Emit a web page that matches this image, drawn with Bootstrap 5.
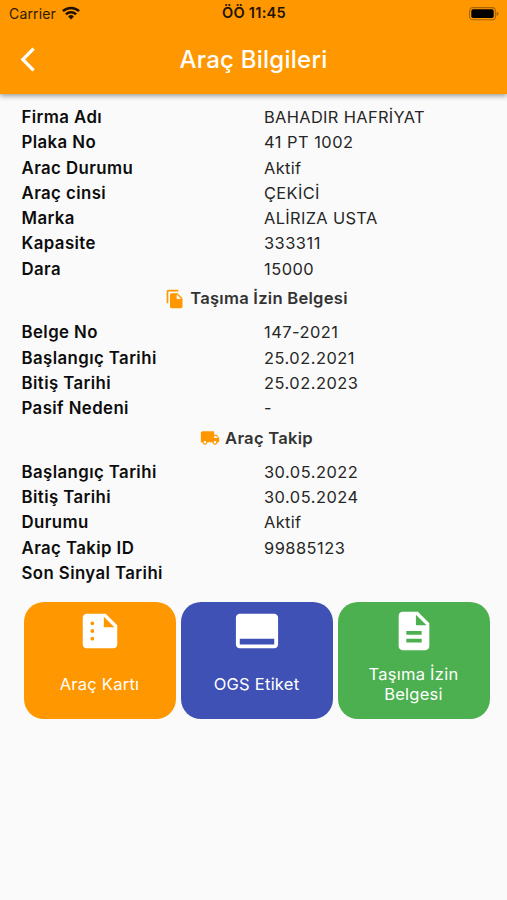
<!DOCTYPE html>
<html lang="tr">
<head>
<meta charset="utf-8">
<meta name="viewport" content="width=device-width, initial-scale=1">
<title>Araç Bilgileri</title>
<link rel="stylesheet" href="https://cdn.jsdelivr.net/npm/bootstrap@5.3.0/dist/css/bootstrap.min.css">
<style>
body{font-family:Inter,"Liberation Sans",sans-serif;background:#fafafa;color:#262626;font-size:16.4px;min-height:900px;overflow:hidden}
.app-header{background:#ff9800;height:94px;box-shadow:0 2px 5px rgba(0,0,0,.38)}
.status-line{height:27px;font-size:14px;letter-spacing:.15px;color:#2b1a00;padding:0 8px 0 9px}
.status-line>*{flex:1 1 0}
.wifi{margin:-2px 0 0 6px}
.clock{font-weight:600;color:#1f1300;font-size:14.6px;letter-spacing:.25px;padding-top:1px}
.title-line{height:66px;color:#fff}
.side{width:60px;padding-left:20px}
.side svg{margin-top:-1px}
.title-text{font-size:24px;font-weight:500;letter-spacing:.25px}
.info{padding:11.2px 21.5px 0}
.info-row{height:25.25px;line-height:25.25px;white-space:nowrap}
.info-row dt,.info-row dd{flex:0 0 242.5px;margin:0;letter-spacing:.35px}
.info-row .num{letter-spacing:.5px}
.info-row dt{font-weight:600;color:#0c0c0c;font-size:16.8px;letter-spacing:.42px}
.section-title{height:38.5px;padding:0 0 5px 6px;font-weight:600;color:#333;gap:5px;font-size:16.6px;letter-spacing:.25px}
.section-title svg{fill:#ff9800}
.tiles{gap:5px;padding:15.9px 17.5px 0 23.5px}
.tile{flex:1 1 0;height:117px;border-radius:20px;color:#fff;padding-top:5.5px}
.tile svg{fill:#fff}
.tile-text{height:61px;font-size:16.5px;letter-spacing:.25px;line-height:20.5px}
.orange{background:#ff9800}.indigo{background:#3f51b5}.green{background:#4caf50}
</style>
<script src="https://cdn.jsdelivr.net/npm/bootstrap@5.3.0/dist/js/bootstrap.bundle.min.js"></script>
</head>
<body>
<header class="app-header">
  <div class="status-line d-flex align-items-center">
    <div class="d-flex align-items-center"><span>Carrier</span>
      <svg class="wifi" width="18" height="14" viewBox="0 0 18 14" fill="none" stroke="#1f1300" stroke-width="2.5"><path d="M.9 5.2a11.6 11.6 0 0 1 16.2 0M3.9 8.3a7.3 7.3 0 0 1 10.2 0"/><path d="M9 13.4 6.1 10.5a4.1 4.1 0 0 1 5.8 0z" fill="#1f1300" stroke="none"/></svg>
    </div>
    <div class="clock text-center">ÖÖ 11:45</div>
    <div class="d-flex justify-content-end">
      <svg width="30" height="14" viewBox="0 0 30 14"><rect x=".6" y=".6" width="25.8" height="12.2" rx="3.4" fill="none" stroke="#a86500" stroke-width="1.1"/><rect x="2.3" y="2.3" width="22.4" height="8.8" rx="1.8" fill="#000"/><path d="M27.6 4.4c2.6.8 2.6 3.8 0 4.6z" fill="#a86500"/></svg>
    </div>
  </div>
  <div class="title-line d-flex align-items-center">
    <div class="side"><svg class="d-block" width="16" height="25" viewBox="0 0 16 25" fill="none" stroke="#fff" stroke-width="3.2"><path d="M13.6 1.6 2.8 12.5l10.8 10.9"/></svg></div>
    <div class="title-text flex-fill text-center">Araç Bilgileri</div>
    <div class="side"></div>
  </div>
</header>
<main>
  <div class="info">
    <dl class="mb-0">
      <div class="info-row d-flex"><dt>Firma Adı</dt><dd>BAHADIR HAFRİYAT</dd></div>
      <div class="info-row d-flex"><dt>Plaka No</dt><dd class="num">41 PT 1002</dd></div>
      <div class="info-row d-flex"><dt>Arac Durumu</dt><dd>Aktif</dd></div>
      <div class="info-row d-flex"><dt>Araç cinsi</dt><dd>ÇEKİCİ</dd></div>
      <div class="info-row d-flex"><dt>Marka</dt><dd>ALİRIZA USTA</dd></div>
      <div class="info-row d-flex"><dt>Kapasite</dt><dd class="num">333311</dd></div>
      <div class="info-row d-flex"><dt>Dara</dt><dd class="num">15000</dd></div>
    </dl>
    <div class="section-title d-flex align-items-center justify-content-center">
      <svg width="20" height="20" viewBox="0 0 24 24"><path d="M16 1H4c-1.1 0-2 .9-2 2v14h2V3h12V1zm-1 4 6 6v10c0 1.1-.9 2-2 2H7.99C6.89 23 6 22.1 6 21V7c0-1.1.9-2 1.99-2H15zm-1 7h5.5L14 6.5V12z"/></svg>
      <span>Taşıma İzin Belgesi</span>
    </div>
    <dl class="mb-0">
      <div class="info-row d-flex"><dt>Belge No</dt><dd class="num">147-2021</dd></div>
      <div class="info-row d-flex"><dt>Başlangıç Tarihi</dt><dd class="num">25.02.2021</dd></div>
      <div class="info-row d-flex"><dt>Bitiş Tarihi</dt><dd class="num">25.02.2023</dd></div>
      <div class="info-row d-flex"><dt>Pasif Nedeni</dt><dd>-</dd></div>
    </dl>
    <div class="section-title d-flex align-items-center justify-content-center">
      <svg width="20" height="20" viewBox="0 0 24 24"><path d="M20 8h-3V4H3c-1.1 0-2 .9-2 2v11h2c0 1.66 1.34 3 3 3s3-1.34 3-3h6c0 1.66 1.34 3 3 3s3-1.34 3-3h2v-5l-3-4zM6 18.5c-.83 0-1.5-.67-1.5-1.5s.67-1.5 1.5-1.5 1.5.67 1.5 1.5-.67 1.5-1.5 1.5zm13.5-9 1.96 2.5H17V9.5h2.5zm-1.5 9c-.83 0-1.5-.67-1.5-1.5s.67-1.5 1.5-1.5 1.5.67 1.5 1.5-.67 1.5-1.5 1.5z"/></svg>
      <span>Araç Takip</span>
    </div>
    <dl class="mb-0">
      <div class="info-row d-flex"><dt>Başlangıç Tarihi</dt><dd class="num">30.05.2022</dd></div>
      <div class="info-row d-flex"><dt>Bitiş Tarihi</dt><dd class="num">30.05.2024</dd></div>
      <div class="info-row d-flex"><dt>Durumu</dt><dd>Aktif</dd></div>
      <div class="info-row d-flex"><dt>Araç Takip ID</dt><dd class="num">99885123</dd></div>
      <div class="info-row d-flex"><dt>Son Sinyal Tarihi</dt><dd></dd></div>
    </dl>
  </div>
  <div class="tiles d-flex">
    <div class="tile orange d-flex flex-column align-items-center">
      <svg width="46" height="46" viewBox="0 0 24 24"><path fill-rule="evenodd" d="M15 3H5c-1.1 0-2 .9-2 2v14c0 1.1.9 2 2 2h14c1.1 0 2-.9 2-2V9l-6-6zM8 17a1 1 0 1 1 0-2 1 1 0 0 1 0 2zm0-4a1 1 0 1 1 0-2 1 1 0 0 1 0 2zm0-4a1 1 0 1 1 0-2 1 1 0 0 1 0 2zm6 1V4.5l5.5 5.5H14z"/></svg>
      <div class="tile-text d-flex align-items-center text-center"><span>Araç Kartı</span></div>
    </div>
    <div class="tile indigo d-flex flex-column align-items-center">
      <svg width="46" height="46" viewBox="0 0 24 24"><path d="M21 3H3c-1.1 0-2 .9-2 2v14c0 1.1.9 2 2 2h18c1.1 0 2-.9 2-2V5c0-1.1-.9-2-2-2zm0 16H3v-3h18v3z"/></svg>
      <div class="tile-text d-flex align-items-center text-center"><span>OGS Etiket</span></div>
    </div>
    <div class="tile green d-flex flex-column align-items-center">
      <svg width="46" height="46" viewBox="0 0 24 24"><path d="M14 2H6c-1.1 0-1.99.9-1.99 2L4 20c0 1.1.89 2 1.99 2H18c1.1 0 2-.9 2-2V8l-6-6zm2 16H8v-2h8v2zm0-4H8v-2h8v2zm-3-5V3.5L18.5 9H13z"/></svg>
      <div class="tile-text d-flex align-items-center text-center"><span>Taşıma İzin<br>Belgesi</span></div>
    </div>
  </div>
</main>
</body>
</html>
